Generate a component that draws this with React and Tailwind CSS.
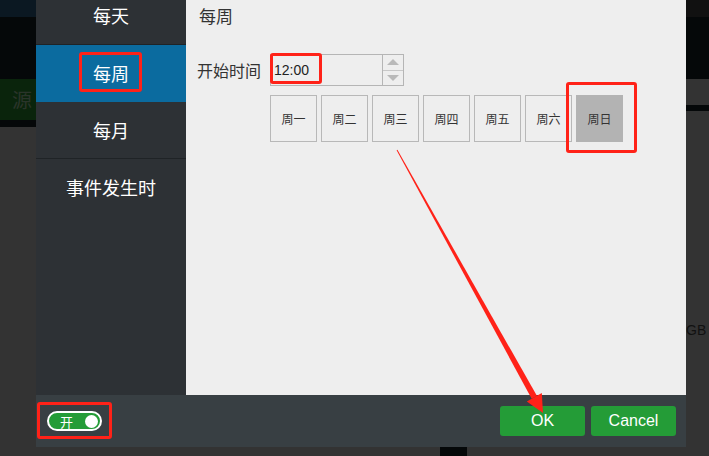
import React from "react"

const days = ["周一", "周二", "周三", "周四", "周五", "周六", "周日"]
const menu = ["每周", "每月", "事件发生时"]

const cjk = "font-['Microsoft_YaHei','Noto_Sans_CJK_SC',sans-serif]"

export default function App() {
    return (
        <div className={`relative w-[709px] h-[456px] flex bg-[#333333] overflow-hidden ${cjk}`}>
            {/* left backdrop strip */}
            <div className="w-[36px] flex flex-col">
                <div className="h-[17px] bg-[#0b1822]" />
                <div className="h-[62px] bg-[#050809]" />
                <div className="h-[41px] bg-[#0a240c] flex items-center justify-end pr-[4px] text-[20px] text-[#2a342a]">源</div>
                <div className="h-[7px] bg-[#050809]" />
                <div className="flex-1 bg-[#333333]" />
            </div>

            {/* dialog */}
            <div className="w-[650px] flex flex-col">
                <div className="h-[395px] flex">
                    <div className="w-[150px] bg-[#2d3135] flex flex-col text-white text-[18px]">
                        <div className="h-[45px] flex items-center justify-center pb-[14px] border-b border-[#1f2326]">每天</div>
                        {menu.map((m, i) => (
                            <div
                                key={m}
                                className={`h-[57px] flex items-center justify-center ${i === 0 ? "bg-[#0b6b9f]" : i === 1 ? "border-b border-[#1f2326]" : ""}`}
                            >
                                {m}
                            </div>
                        ))}
                    </div>
                    <div className="flex-1 bg-[#eeeeee] flex flex-col pl-[11px] pt-[4px] text-[#333]">
                        <div className="text-[17px] leading-[24px] pl-[2px]">每周</div>
                        <div className="flex items-center mt-[26px]">
                            <div className="w-[73px] text-[16px]">开始时间</div>
                            <div className="flex h-[32px]">
                                <div className="w-[113px] border border-[#b5b5b5] flex items-center pl-[3px] text-[14px] text-[#222] font-['Liberation_Sans',sans-serif]">12:00</div>
                                <div className="w-[21px] flex flex-col border border-l-0 border-[#b5b5b5]">
                                    <div className="flex-1 flex items-center justify-center border-b border-[#c8c8c8]">
                                        <svg width="12" height="6" viewBox="0 0 12 6"><path d="M0 6 L6 0 L12 6 Z" fill="#b9b9b9" /></svg>
                                    </div>
                                    <div className="flex-1 flex items-center justify-center">
                                        <svg width="12" height="6" viewBox="0 0 12 6"><path d="M0 0 L6 6 L12 0 Z" fill="#b9b9b9" /></svg>
                                    </div>
                                </div>
                            </div>
                        </div>
                        <div className="flex gap-[4px] ml-[73px] mt-[9px]">
                            {days.map((d, i) => (
                                <div
                                    key={d}
                                    className={`w-[47px] h-[47px] flex items-center justify-center text-[12px] text-[#333] ${i === 6 ? "bg-[#b3b3b3]" : "border border-[#b8b8b8]"}`}
                                >
                                    {d}
                                </div>
                            ))}
                        </div>
                    </div>
                </div>
                <div className="h-[52px] bg-[#383f43] flex items-center justify-between pl-[11px] pr-[10px]">
                    <div className="w-[55px] h-[20px] rounded-full border-2 border-white bg-[#249c37] flex items-center justify-between pl-[11px] pr-[2px]">
                        <span className="text-[13px] text-white leading-none">开</span>
                        <span className="w-[13px] h-[13px] rounded-full bg-white" />
                    </div>
                    <div className="flex gap-[6px]">
                        <button className="w-[85px] h-[30px] rounded-[3px] bg-[#249c37] text-white text-[16px] font-['Liberation_Sans',sans-serif]">OK</button>
                        <button className="w-[85px] h-[30px] rounded-[3px] bg-[#249c37] text-white text-[16px] font-['Liberation_Sans',sans-serif]">Cancel</button>
                    </div>
                </div>
                <div className="flex-1 flex">
                    <div className="w-[404px]" />
                    <div className="w-[27px] bg-[#050809]" />
                </div>
            </div>

            {/* right backdrop strip */}
            <div className="flex-1 flex flex-col">
                <div className="h-[17px] bg-[#111111]" />
                <div className="h-[62px] bg-[#050809]" />
                <div className="h-[26px] bg-[#333333]" />
                <div className="h-[6px] bg-[#050809]" />
                <div className="flex-1 bg-[#333333] pt-[212px] text-[14px] text-[#111] font-['Liberation_Sans',sans-serif] leading-none">GB</div>
            </div>

            {/* annotations */}
            <div className="absolute left-[79px] top-[52px] w-[63px] h-[40px] border-[3px] border-[#ff2218] rounded-[3px]" />
            <div className="absolute left-[270px] top-[53px] w-[52px] h-[31px] border-[3px] border-[#ff2218] rounded-[3px]" />
            <div className="absolute left-[566px] top-[82px] w-[71px] h-[71px] border-[3px] border-[#ff2218] rounded-[3px]" />
            <div className="absolute left-[37px] top-[402px] w-[75px] h-[37px] border-[3px] border-[#ff2218] rounded-[3px]" />
            <svg className="absolute left-0 top-0" width="709" height="456" viewBox="0 0 709 456">
                <polygon points="396.6,150.2 397.4,149.8 537,396 531.7,398.8" fill="#ff2218" />
                <polygon points="543,413 526.8,401.5 541.8,393.1" fill="#ff2218" />
            </svg>
        </div>
    )
}
